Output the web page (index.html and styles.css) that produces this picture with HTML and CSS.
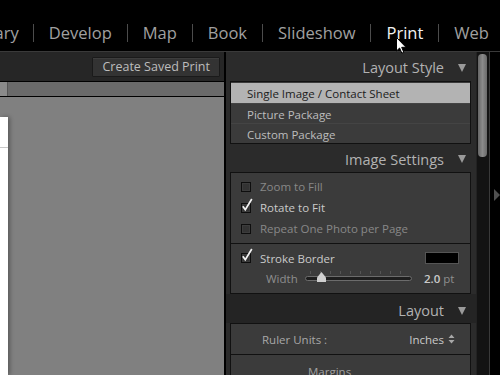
FILE: index.html
```html
<!DOCTYPE html>
<html lang="en">

<head>
    <meta charset="UTF-8">
    <meta name="viewport" content="width=device-width, initial-scale=1.0">
    <title>Print</title>
    <link rel="stylesheet" href="styles.css">
</head>

<body>

    <div class="app">
        <nav class="modules">
            <span class="module module-first">Library</span>
            <span class="module">Develop</span>
            <span class="module">Map</span>
            <span class="module">Book</span>
            <span class="module">Slideshow</span>
            <span class="module active">Print</span>
            <span class="module">Web</span>
        </nav>

        <div class="workspace">
            <div class="preview">
                <div class="toolbar">
                    <button type="button" class="btn">Create Saved Print</button>
                </div>
                <div class="ruler"><div class="ruler-corner"></div></div>
                <div class="canvas">
                    <div class="page"></div>
                </div>
            </div>

            <aside class="panel">
                <div class="panel-body">
                    <section class="section">
                        <header class="section-head">
                            <span>Layout Style</span>
                            <i class="caret"></i>
                        </header>
                        <ul class="box list">
                            <li class="selected">Single Image / Contact Sheet</li>
                            <li>Picture Package</li>
                            <li>Custom Package</li>
                        </ul>
                    </section>

                    <section class="section">
                        <header class="section-head">
                            <span>Image Settings</span>
                            <i class="caret"></i>
                        </header>
                        <div class="box">
                            <div class="group">
                                <div class="check dim"><span class="cb"></span>Zoom to Fill</div>
                                <div class="check">
                                    <span class="cb">
                                        <svg class="tick" viewBox="0 0 12 14" width="12" height="14"><path d="M1.8 8.2 L4.3 11.8 L10.8 1" fill="none" stroke="#f2f2f2" stroke-width="1.7"/></svg>
                                    </span>Rotate to Fit
                                </div>
                                <div class="check dim"><span class="cb"></span>Repeat One Photo per Page</div>
                            </div>
                            <div class="group group-stroke">
                                <div class="check">
                                    <span class="cb">
                                        <svg class="tick" viewBox="0 0 12 14" width="12" height="14"><path d="M1.8 8.2 L4.3 11.8 L10.8 1" fill="none" stroke="#f2f2f2" stroke-width="1.7"/></svg>
                                    </span>Stroke Border
                                    <span class="swatch"></span>
                                </div>
                                <div class="slider-row">
                                    <span class="slider-label">Width</span>
                                    <div class="slider">
                                        <span class="slider-thumb"></span>
                                    </div>
                                    <span class="value"><b>2.0</b> pt</span>
                                </div>
                            </div>
                        </div>
                    </section>

                    <section class="section">
                        <header class="section-head section-head-dark">
                            <span>Layout</span>
                            <i class="caret"></i>
                        </header>
                        <div class="box">
                            <div class="units-row">
                                <span>Ruler Units :</span>
                                <span class="units-value">Inches
                                    <svg viewBox="0 0 7 10" width="7" height="10"><path d="M3.5 0.5 L6.5 4 L0.5 4 Z M3.5 9.5 L6.5 6 L0.5 6 Z" fill="#a8a8a8"/></svg>
                                </span>
                            </div>
                            <div class="margins-row">Margins</div>
                        </div>
                    </section>
                </div>
                <div class="scrollbar"><div class="scroll-thumb"></div></div>
            </aside>

            <div class="edge"><i class="edge-arrow"></i></div>
        </div>

        <!-- mouse pointer over the Print tab -->
        <svg class="cursor" viewBox="0 0 12 18" width="12" height="18">
            <path d="M0.5 0.5 L0.5 14 L3.6 11 L5.8 16.2 L7.8 15.3 L5.7 10.3 L10 10.3 Z" fill="#fff" stroke="#000" stroke-width="1"/>
        </svg>
    </div>

</body>

</html>
```

FILE: styles.css
```css
body {
    margin: 0;
    background-color: #000;
    font-family: 'Open Sans', 'Liberation Sans', sans-serif;
    color: #c4c4c4;
}

.app {
    position: relative;
    width: 500px;
    height: 375px;
    overflow: hidden;
    display: flex;
    flex-direction: column;
}

/* module picker */
.modules {
    display: flex;
    align-items: flex-start;
    height: 52px;
    box-sizing: border-box;
    padding-top: 24px;
    border-bottom: 1px solid #3a3a3a;
    white-space: nowrap;
}

.module {
    font-size: 16.5px;
    line-height: 18px;
    padding: 0 15px;
    color: #a0a0a0;
}

.module + .module {
    border-left: 1px solid #4c4c4c;
}

.module-first {
    margin-left: -35px;
    padding-left: 0;
    padding-right: 14px;
}

.module.active {
    color: #f2f2f2;
}

.workspace {
    flex: 1;
    display: flex;
    min-height: 0;
}

/* left preview area */
.preview {
    width: 224px;
    display: flex;
    flex-direction: column;
    border-right: 2px solid #000;
}

.toolbar {
    height: 29px;
    background-color: #262626;
    display: flex;
    align-items: center;
    justify-content: flex-end;
    padding-right: 4px;
}

.btn {
    height: 20px;
    padding: 0 9px;
    font-family: inherit;
    font-size: 12.5px;
    line-height: 18px;
    color: #bdbdbd;
    background-color: #333;
    border: 1px solid #1a1a1a;
    box-shadow: inset 0 1px 0 #3d3d3d;
    border-radius: 1px;
}

.ruler {
    height: 14px;
    border-top: 1px solid #000;
    border-bottom: 1px solid #000;
    background-color: #6a6a6a;
    display: flex;
}

.ruler-corner {
    width: 7px;
    background-color: #8a8a8a;
    border-right: 1px solid #555;
}

.canvas {
    flex: 1;
    background-color: #808080;
    padding-top: 20px;
}

.page {
    width: 8px;
    height: 100%;
    background: linear-gradient(#fff 0 30px, #c8c8c8 30px 31px, #fff 31px);
    box-shadow: 2px 0 4px rgba(0, 0, 0, 0.3);
}

/* right panel */
.panel {
    display: flex;
    background-color: #2b2b2b;
}

.panel-body {
    width: 250px;
}

.section-head {
    display: flex;
    align-items: center;
    justify-content: flex-end;
    height: 28px;
    padding: 2px 10px 0 0;
    box-sizing: border-box;
    font-size: 14.5px;
    color: #b2b2b2;
}

.section:first-child .section-head {
    height: 29px;
}

.section-head-dark {
    background-color: #242424;
    height: 29px;
    padding-top: 4px;
}

.caret {
    width: 0;
    height: 0;
    margin-left: 14px;
    border-left: 4.5px solid transparent;
    border-right: 4.5px solid transparent;
    border-top: 8px solid #9a9a9a;
}

.box {
    margin: 0 5px 0 4px;
    border: 1px solid #111;
    background-color: #3b3b3b;
    font-size: 11.5px;
}

.list {
    list-style: none;
    padding: 1px 0 0;
    margin-top: 0;
    margin-bottom: 0;
}

.list li {
    height: 20px;
    line-height: 21px;
    padding-left: 16px;
    color: #bdbdbd;
}

.list li + li {
    border-top: 1px solid #444;
    height: 19px;
}

.list li.selected {
    background-color: #b3b3b3;
    color: #1c1c1c;
}

.group {
    padding: 3px 0 4px;
}

.group + .group {
    border-top: 1px solid #111;
}

.group-stroke {
    padding: 4px 0 4px;
}

.check {
    display: flex;
    align-items: center;
    height: 21px;
    padding-left: 10px;
    color: #cacaca;
}

.group-stroke .check {
    height: 20px;
}

.check.dim {
    color: #888;
}

.cb {
    position: relative;
    width: 8px;
    height: 8px;
    margin-right: 9px;
    background-color: #333;
    border: 1px solid #0e0e0e;
    box-shadow: inset 0 0 0 1px #3c3c3c;
}

.tick {
    position: absolute;
    left: -1px;
    top: -6px;
}

.swatch {
    width: 32px;
    height: 10px;
    margin-left: auto;
    margin-right: 11px;
    background-color: #000;
    border: 1px solid #555;
}

.slider-row {
    display: flex;
    align-items: center;
    height: 21px;
    padding-left: 35px;
}

.slider-label {
    color: #8e8e8e;
    width: 39px;
}

.slider {
    position: relative;
    width: 105px;
    height: 3px;
    border: 1px solid #6c6c6c;
    border-radius: 3px;
    background-color: #1e1e1e;
}

.slider::before {
    content: "";
    position: absolute;
    left: 4px;
    right: 4px;
    top: -6px;
    height: 3px;
    background: repeating-linear-gradient(to right, #555 0 1px, transparent 1px 10px);
}

.slider-thumb {
    position: absolute;
    left: 11px;
    top: -5px;
    width: 9px;
    height: 10px;
    background-color: #cfcfcf;
    clip-path: polygon(50% 0, 100% 55%, 100% 100%, 0 100%, 0 55%);
}

.value {
    margin-left: 12px;
    color: #8e8e8e;
}

.value b {
    color: #cacaca;
    font-weight: 600;
}

.units-row {
    display: flex;
    justify-content: space-between;
    align-items: center;
    height: 30px;
    padding: 0 15px 0 31px;
    color: #a8a8a8;
    border-bottom: 1px solid #111;
}

.units-value {
    display: flex;
    align-items: center;
    gap: 4px;
    color: #cacaca;
}

.margins-row {
    height: 30px;
    line-height: 33px;
    padding-left: 77px;
    color: #a0a0a0;
}

.scrollbar {
    width: 12px;
    background-color: #131313;
    border-left: 1px solid #222;
    border-right: 1px solid #3a3a3a;
    padding-top: 2px;
}

.scroll-thumb {
    width: 9px;
    height: 103px;
    margin-left: 1px;
    border-radius: 4px;
    background: linear-gradient(to right, #666, #8a8a8a 50%, #6a6a6a);
}

.edge {
    flex: 1;
    display: flex;
    align-items: center;
    justify-content: flex-end;
    padding-bottom: 37px;
    background-color: #000;
}

.edge-arrow {
    width: 0;
    height: 0;
    border-top: 6px solid transparent;
    border-bottom: 6px solid transparent;
    border-left: 6px solid #505050;
}

.cursor {
    position: absolute;
    left: 396px;
    top: 37px;
}
```
